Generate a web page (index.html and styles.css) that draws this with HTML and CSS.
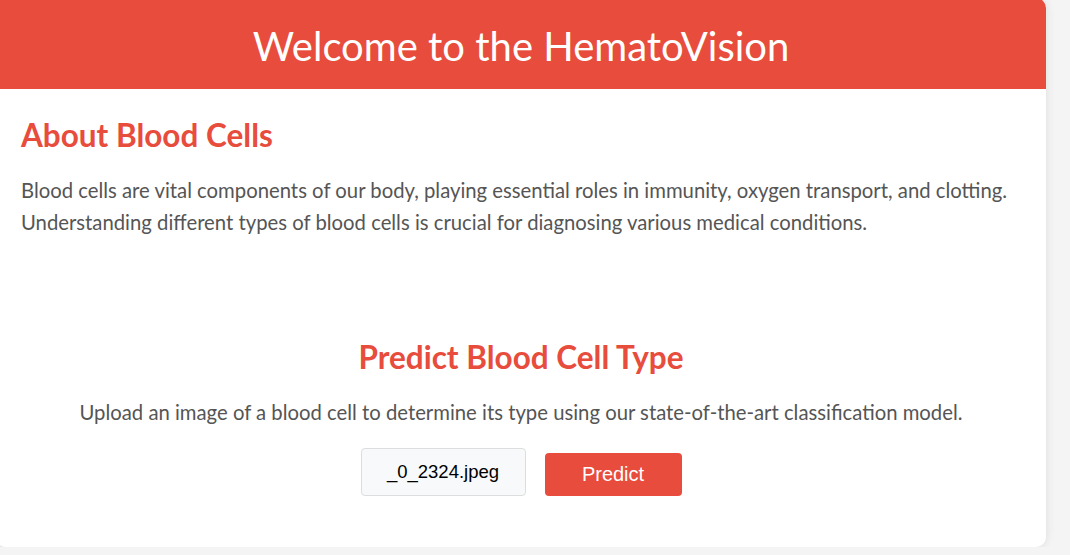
FILE: index.html
```html
<!DOCTYPE html>
<html lang="en">
<head>
<meta charset="utf-8">
<title>HematoVision</title>
<link rel="stylesheet" href="styles.css">
</head>
<body>
<div class="container">
  <header class="header">
    <h1 class="title">Welcome to the HematoVision</h1>
  </header>
  <main class="content">
    <section class="about">
      <h2 class="heading">About Blood Cells</h2>
      <p class="text">Blood cells are vital components of our body, playing essential roles in immunity, oxygen transport, and clotting. Understanding different types of blood cells is crucial for diagnosing various medical conditions.</p>
    </section>
    <section class="predict">
      <h2 class="heading">Predict Blood Cell Type</h2>
      <p class="text">Upload an image of a blood cell to determine its type using our state-of-the-art classification model.</p>
      <form class="form">
        <label class="file">_0_2324.jpeg</label>
        <button type="button" class="btn">Predict</button>
      </form>
    </section>
  </main>
</div>
</body>
</html>
```
FILE: styles.css
```css
html, body {
  margin: 0;
  padding: 0;
  background: #f4f4f4;
  overflow: hidden;
}
body {
  font-family: "Lato", "Noto Sans", sans-serif;
}
.container {
  width: 1050px;
  margin: -2px 0 0 -4px;
  background: #ffffff;
  border-radius: 10px;
  overflow: hidden;
  box-shadow: 0 0 10px rgba(0, 0, 0, 0.1);
}
.header {
  background: #e74c3c;
  padding: 24px 0 19px;
  text-align: center;
}
.title {
  margin: 0;
  font-size: 40px;
  line-height: 48px;
  font-weight: 400;
  color: #ffffff;
}
.content {
  padding: 27px 25px 51px;
}
.heading {
  margin: 0;
  font-size: 31.5px;
  line-height: 38px;
  font-weight: 700;
  color: #e74c3c;
}
.text {
  margin: 20px 0 0;
  font-size: 20.3px;
  line-height: 32px;
  color: #555555;
}
.predict {
  margin-top: 100px;
  text-align: center;
}
.form {
  margin-top: 20px;
  display: flex;
  justify-content: center;
  align-items: flex-end;
  gap: 19px;
}
.file {
  box-sizing: border-box;
  width: 165px;
  height: 48px;
  display: flex;
  align-items: center;
  justify-content: center;
  background: #f8f9fa;
  border: 1px solid #dddddd;
  border-radius: 4px;
  font-family: "Liberation Sans", Arial, sans-serif;
  font-size: 18.5px;
  color: #000000;
}
.btn {
  box-sizing: border-box;
  width: 137px;
  height: 43px;
  padding: 0;
  border: none;
  border-radius: 4px;
  background: #e74c3c;
  color: #ffffff;
  font-family: "Liberation Sans", Arial, sans-serif;
  font-size: 20px;
  cursor: pointer;
}
```
